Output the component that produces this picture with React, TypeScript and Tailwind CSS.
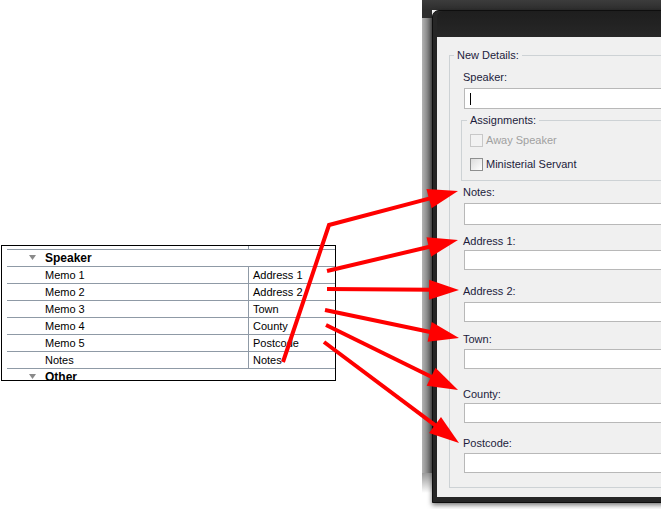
const rows = [
  ["Memo 1", "Address 1"],
  ["Memo 2", "Address 2"],
  ["Memo 3", "Town"],
  ["Memo 4", "County"],
  ["Memo 5", "Postcode"],
  ["Notes", "Notes"],
];

const fields = [
  { label: "Notes:", lm: "mt-[4px]", tm: "mt-[4px]", h: "h-[22px]" },
  { label: "Address 1:", lm: "mt-[9px]", tm: "mt-[2px]", h: "h-[20px]" },
  { label: "Address 2:", lm: "mt-[14px]", tm: "mt-[4px]", h: "h-[20px]" },
  { label: "Town:", lm: "mt-[10px]", tm: "mt-[3px]", h: "h-[20px]" },
  { label: "County:", lm: "mt-[18px]", tm: "mt-[2px]", h: "h-[20px]" },
  { label: "Postcode:", lm: "mt-[13px]", tm: "mt-[3px]", h: "h-[20px]" },
];

const arrows: number[][][] = [
  [[283, 362], [329, 225], [458, 191]],
  [[327, 271], [458, 240]],
  [[327, 289], [459, 290]],
  [[325, 310], [459, 338]],
  [[326, 325], [458, 390]],
  [[324, 342], [459, 443]],
];

function Arrow({ pts }: { pts: number[][] }) {
  const [tx, ty] = pts[pts.length - 1];
  const [px, py] = pts[pts.length - 2];
  const len = Math.hypot(tx - px, ty - py);
  const ux = (tx - px) / len;
  const uy = (ty - py) / len;
  const bx = tx - ux * 30;
  const by = ty - uy * 30;
  const head = `${tx},${ty} ${bx + uy * 10},${by - ux * 10} ${bx - uy * 10},${by + ux * 10}`;
  const line = [...pts.slice(0, -1), [bx + ux * 3, by + uy * 3]]
    .map((p) => p.join(","))
    .join(" ");
  return (
    <g>
      <polyline points={line} fill="none" stroke="#ff0000" strokeWidth={4} />
      <polygon points={head} fill="#ff0000" />
    </g>
  );
}

function GroupRow({ label }: { label: string }) {
  return (
    <div className="ml-[5px] flex h-[17px] items-center border-b border-[#8f9aa6] pl-[22px]">
      <svg width="7" height="6" viewBox="0 0 7 6">
        <polygon points="0,0 7,0 3.5,5" fill="#8a8a8a" />
      </svg>
      <span className="ml-[9px] text-[12px] font-bold leading-[16px]">{label}</span>
    </div>
  );
}

function PropertyGrid() {
  return (
    <div className="ml-[1px] mt-[245px] h-[136px] w-[335px] overflow-hidden border border-black text-[11px] text-black">
      <div className="ml-[5px] flex h-[4px] border-b border-[#8f9aa6]">
        <div className="w-[242px] border-r border-[#8f9aa6]" />
      </div>
      <GroupRow label="Speaker" />
      {rows.map(([name, value]) => (
        <div key={name} className="ml-[5px] flex h-[17px] border-b border-[#8f9aa6] leading-[16px]">
          <div className="w-[242px] border-r border-[#8f9aa6] pl-[38px]">{name}</div>
          <div className="pl-[4px]">{value}</div>
        </div>
      ))}
      <GroupRow label="Other" />
    </div>
  );
}

function Checkbox({ label, disabled }: { label: string; disabled?: boolean }) {
  return (
    <div className="flex h-[13px] items-center gap-[3px] leading-[13px]">
      <div
        className={
          disabled
            ? "h-[13px] w-[13px] border border-[#c8c8c8] bg-[#f2f2f2]"
            : "h-[13px] w-[13px] border border-[#8e8f8f] bg-gradient-to-br from-[#dcdcdc] to-white"
        }
      />
      <span className={disabled ? "text-[#a0a0a0]" : ""}>{label}</span>
    </div>
  );
}

function DialogShot() {
  return (
    <div className="flex w-[239px] shrink-0 flex-col">
      <div className="h-[10px] bg-gradient-to-b from-[#3c3c3c] to-[#2e2e2e]" />
      <div className="flex">
        <div className="flex w-[10px] shrink-0 flex-col">
          <div className="h-[8px] bg-[#2e2e2e]" />
          <div className="h-[455px] bg-gradient-to-r from-[#b4b4b4] via-[#8c8c8c] to-[#5c5c5c]" />
          <div className="h-[20px] bg-gradient-to-b from-[#9a9a9a] to-white" />
        </div>
        <div className="w-[240px] shrink-0 rounded-tl-[7px] border border-[#0e0e0e] bg-[#262626] pb-[5px] pl-[4px] shadow-[0_2px_5px_rgba(0,0,0,0.55)]">
          <div className="h-[26px] rounded-tl-[6px] bg-gradient-to-b from-[#1e1e1e] to-[#272727]" />
          <div className="h-[460px] overflow-hidden bg-[#f0f0f0] pl-[12px] pt-[11px] text-[11px] text-[#1c1c3c]">
            <fieldset className="w-[260px] border border-[#cdd2d5] pb-[14px]">
              <legend className="ml-[4px] px-[3px] leading-[14px]">New Details:</legend>
              <div className="ml-[13px] mt-[8px] leading-[14px]">Speaker:</div>
              <div className="ml-[14px] mt-[4px] flex h-[21px] w-[230px] items-center border border-[#b8b8b8] bg-white">
                <div className="ml-[5px] h-[12px] w-px bg-black" />
              </div>
              <fieldset className="ml-[11px] mt-[4px] w-[240px] border border-[#cdd2d5] pb-[9px] pl-[8px]">
                <legend className="ml-[-3px] px-[3px] leading-[14px]">Assignments:</legend>
                <div className="mt-[7px]">
                  <Checkbox label="Away Speaker" disabled />
                </div>
                <div className="mt-[11px]">
                  <Checkbox label="Ministerial Servant" />
                </div>
              </fieldset>
              {fields.map((f) => (
                <div key={f.label}>
                  <div className={`ml-[13px] leading-[14px] ${f.lm}`}>{f.label}</div>
                  <div className={`ml-[14px] w-[230px] border border-[#b8b8b8] bg-white ${f.tm} ${f.h}`} />
                </div>
              ))}
            </fieldset>
          </div>
        </div>
      </div>
    </div>
  );
}

export default function App() {
  return (
    <div className="relative flex h-[509px] w-[661px] overflow-hidden bg-white font-['Liberation_Sans',Arial,sans-serif]">
      <div className="w-[422px] shrink-0">
        <PropertyGrid />
      </div>
      <DialogShot />
      <svg className="pointer-events-none absolute left-0 top-0" width="661" height="509">
        {arrows.map((pts, i) => (
          <Arrow key={i} pts={pts} />
        ))}
      </svg>
    </div>
  );
}
